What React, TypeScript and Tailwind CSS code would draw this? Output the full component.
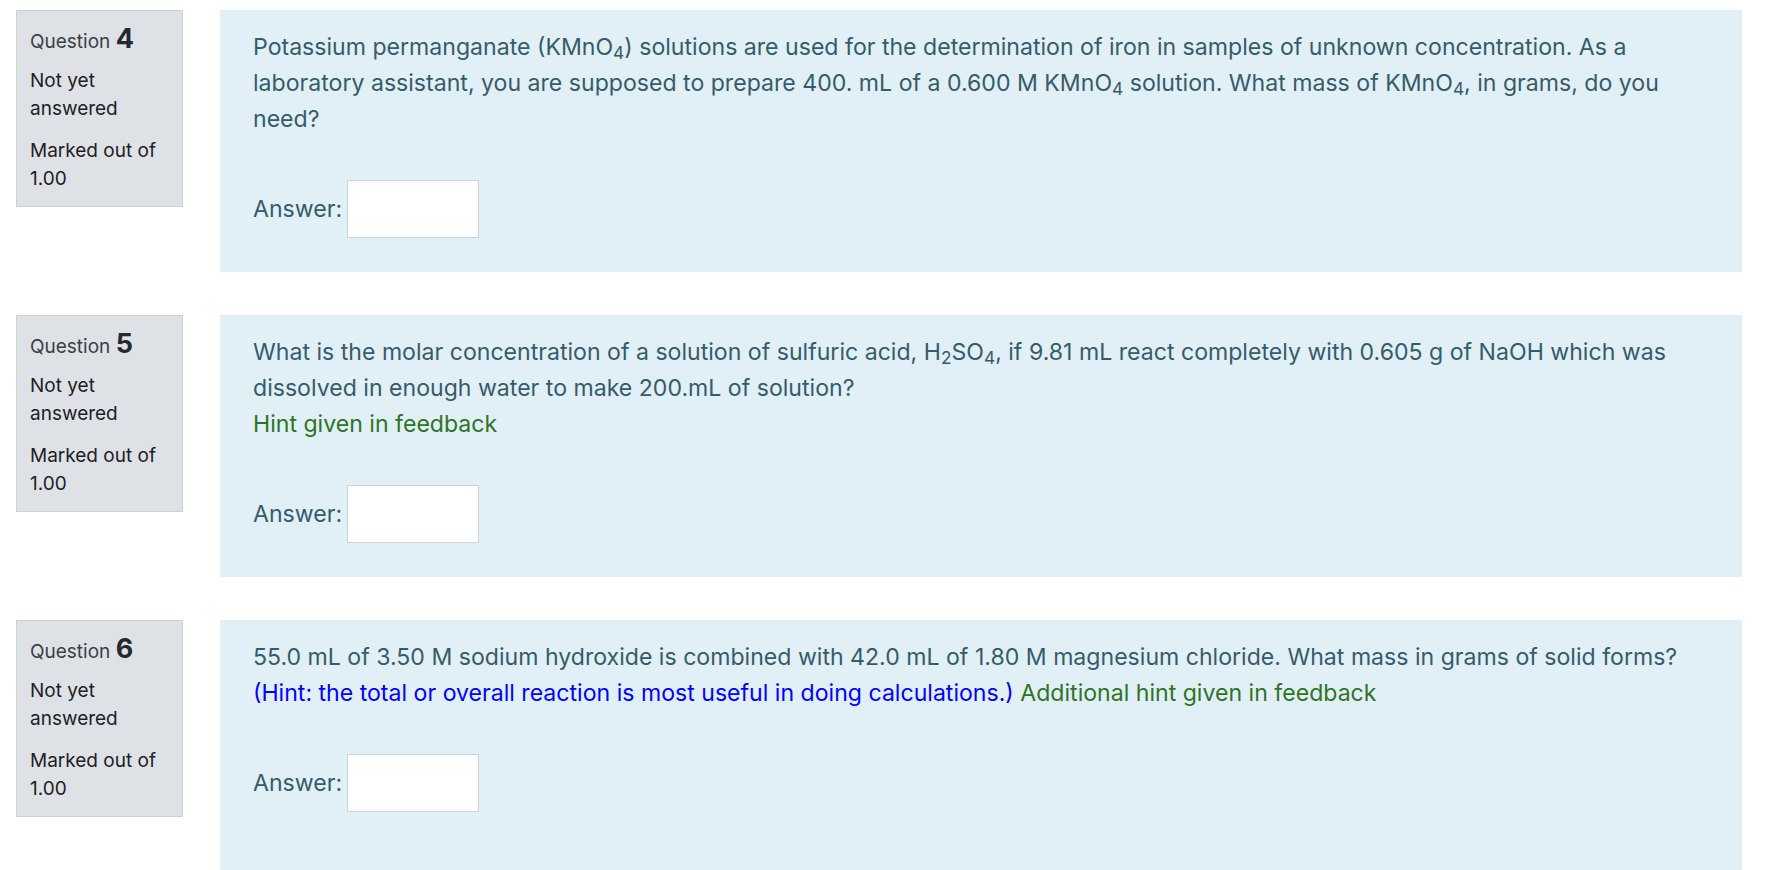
import type { ReactNode } from 'react';

interface QuestionProps {
  num: number;
  children: ReactNode;
  last?: boolean;
}

function Question({ num, children, last }: QuestionProps) {
  return (
    <div className="flex items-start gap-[37px]">
      {/* info block */}
      <div className="w-[167px] shrink-0 bg-[#dee2e6] border border-[#cbd1d7] pl-[13px] pt-[10px] pb-[13px] text-[#1d2125]">
        <h3 className="leading-[36px] text-[19px] text-[#3a3f44] font-normal">
          Question <span className="text-[27px] font-bold text-[#25292d]">{num}</span>
        </h3>
        <div className="mt-[7px] text-[19px] leading-[27.5px]">
          Not yet
          <br />
          answered
        </div>
        <div className="mt-[15px] text-[19px] leading-[28px]">
          Marked out of
          <br />
          1.00
        </div>
      </div>

      {/* formulation block */}
      <div
        className={`flex-1 bg-[#e1eff7] pl-[33px] pr-[33px] pt-[19px] text-[#365b6a] text-[23.1px] leading-[36px] ${
          last ? 'pb-[58px]' : 'pb-[34px]'
        }`}
      >
        <div>{children}</div>
        <div className="mt-[43px] flex items-center">
          <span>Answer:</span>
          <span className="ml-[5px] w-[132px] h-[58px] bg-white border border-[#ced4da]" />
        </div>
      </div>
    </div>
  );
}

export default function App() {
  return (
    <div
      className="bg-white pt-[10px] pl-[16px] pr-[34px] flex flex-col gap-[43px]"
      style={{ fontFamily: 'Inter, "Noto Sans", "Liberation Sans", sans-serif' }}
    >
      <Question num={4}>
        Potassium permanganate (KMnO<sub>4</sub>) solutions are used for the determination of iron in samples of
        unknown concentration. As a laboratory assistant, you are supposed to prepare 400. mL of a 0.600 M KMnO
        <sub>4</sub> solution. What mass of KMnO<sub>4</sub>, in grams, do you need?
      </Question>

      <Question num={5}>
        What is the molar concentration of a solution of sulfuric acid, H<sub>2</sub>SO<sub>4</sub>, if 9.81 mL react
        completely with 0.605 g of NaOH which was dissolved in enough water to make 200.mL of solution?
        <div className="text-[#2e7424]">Hint given in feedback</div>
      </Question>

      <Question num={6} last>
        55.0 mL of 3.50 M sodium hydroxide is combined with 42.0 mL of 1.80 M magnesium chloride. What mass in grams of
        solid forms?
        <br />
        <span className="text-[#0000ff]">(Hint: the total or overall reaction is most useful in doing calculations.)</span>{' '}
        <span className="text-[#2e7424]">Additional hint given in feedback</span>
      </Question>
    </div>
  );
}
